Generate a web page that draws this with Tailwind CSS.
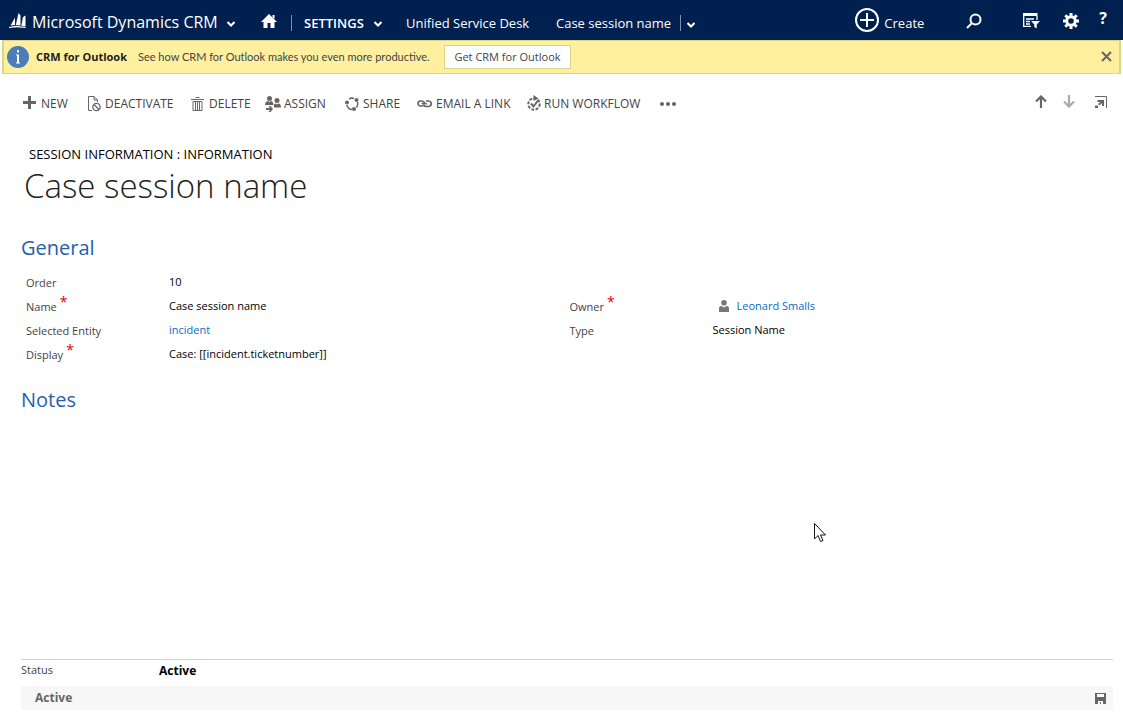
<!DOCTYPE html>
<html lang="en">
<head>
<meta charset="utf-8">
<title>Session Information: Case session name</title>
<script src="https://cdn.jsdelivr.net/npm/@tailwindcss/browser@4"></script>
</head>
<body class="min-h-screen flex flex-col bg-white font-['Open_Sans',sans-serif] text-xs text-[#444]">

<header class="h-10 flex items-center bg-[#00204f] text-white text-[13px] pl-2 pr-4 whitespace-nowrap">
  <a href="#" class="flex items-center w-[228px] pt-[3px]">
    <svg class="w-[18px] h-4 mr-[6px] mb-px" viewBox="0 0 18 16" fill="#fff"><path d="M7 4.500V12L2.500 12.500zM10.500 0 12.500 2.500V12.500L7.800 12zM15 4 17.500 2.500V13.500L13.300 12.700zM1 14 8 12.800 17.500 14V15L9 14.300 1 15z"/></svg>
    <span class="text-base">Microsoft Dynamics CRM</span>
    <svg class="w-2 h-2 ml-auto mr-px mt-1" viewBox="0 0 8 8" fill="none" stroke="#fff" stroke-width="2"><path d="M.5 2 4 5.500 7.500 2"/></svg>
  </a>
  <a href="#" aria-label="Home" class="ml-[25px] pt-[2px]"><svg class="w-4 h-4" viewBox="0 0 16 16" fill="#fff"><path d="M8 1 16 9H13.500V15H9.500V10H6.500V15H2.500V9H0zM11.500 2H13.500V6L11.500 4z"/></svg></a>
  <span class="w-px h-4 bg-[#7f8fa7] ml-[14px] mt-[6px]"></span>
  <button type="button" class="flex items-center ml-3 pt-2 w-[78px] font-semibold">SETTINGS<svg class="w-2 h-2 ml-auto mt-px" viewBox="0 0 8 8" fill="none" stroke="#fff" stroke-width="2"><path d="M.5 2 4 5.500 7.500 2"/></svg></button>
  <a href="#" class="ml-6 pt-2 w-[150px]">Unified Service Desk</a>
  <a href="#" class="pt-2 w-[124px]">Case session name</a>
  <button type="button" aria-label="More records" class="flex items-center border-l border-[#7f8fa7] h-4 mt-[6px] pl-[6px] pt-1"><svg class="w-2 h-2" viewBox="0 0 8 8" fill="none" stroke="#fff" stroke-width="2"><path d="M.5 2 4 5.500 7.500 2"/></svg></button>
  <button type="button" class="ml-auto flex items-center w-[111px]"><svg class="w-6 h-6 mr-[5px]" viewBox="0 0 24 24" fill="none" stroke="#fff" stroke-width="2"><circle cx="12" cy="12" r="11"/><path d="M12 5V19M5 12H19"/></svg><span class="pt-2">Create</span></button>
  <button type="button" aria-label="Search" class="w-[57px] text-left"><svg class="inline w-4 h-4" viewBox="0 0 16 16" fill="none" stroke="#fff" stroke-width="2"><circle cx="9.500" cy="6.500" r="5"/><path d="M6 10 1 15"/></svg></button>
  <button type="button" aria-label="Advanced find" class="w-10 text-left"><svg class="inline w-[17px] h-4" viewBox="0 0 17 16"><path d="M.7 0V13.300H8M14 3V7M3 6H11M3 8.500H7M3 11H7" fill="none" stroke="#fff" stroke-width="1.300"/><path d="M0 0H14.500V3H0zM8 8H17L13.700 11.500V15.500L11.300 14V11.500z" fill="#fff"/></svg></button>
  <button type="button" aria-label="Options" class="w-9 text-left"><svg class="inline w-4 h-4" viewBox="0 0 16 16" fill="none" stroke="#fff"><circle cx="8" cy="8" r="4.300" stroke-width="3"/><path stroke-width="3" d="M8 0V3M8 13V16M0 8H3M13 8H16M2.300 2.300 4.500 4.500M11.500 11.500 13.700 13.700M13.700 2.300 11.500 4.500M4.500 11.500 2.300 13.700"/></svg></button>
  <button type="button" aria-label="Help" class="text-base font-bold leading-4 pb-1">?</button>
</header>

<aside class="h-[34px] ml-[2px] mr-[2px] flex items-center border border-x-2 border-[#d9d58a] bg-[#fff09f] pl-[3px] pr-[7px] whitespace-nowrap text-[11px]">
  <svg class="w-[22px] h-[22px] mr-[7px]" viewBox="0 0 22 22"><circle cx="11" cy="11" r="11" fill="#4b7db8"/><path d="M10 4H12V6.500H10zM9 8.500H12V16.500H13V17.500H9V16.500H10V9.500H9z" fill="#fff"/></svg>
  <strong class="w-[102px] text-[#222]">CRM for Outlook</strong>
  <span class="w-[306px] font-[Lato,sans-serif]">See how CRM for Outlook makes you even more productive.</span>
  <button type="button" class="h-6 w-[127px] bg-white border border-[#d9d58a]">Get CRM for Outlook</button>
  <button type="button" aria-label="Close" class="ml-auto pb-[2px]"><svg class="w-[11px] h-[11px]" viewBox="0 0 11 11" stroke="#666" stroke-width="2"><path d="M1 1 10 10M10 1 1 10"/></svg></button>
</aside>

<nav aria-label="Commands" class="h-[58px] flex items-center pl-[23px] pr-4 pt-px whitespace-nowrap">
  <button type="button" class="flex items-center w-[65px]"><svg class="w-[13px] h-[13px] mr-[5px] mb-[2px]" viewBox="0 0 13 13" stroke="#666" stroke-width="3"><path d="M6.500 0V13M0 6.500H13"/></svg>NEW</button>
  <button type="button" class="flex items-center w-[103px]"><svg class="w-[13px] h-4 mr-1" viewBox="0 0 13 16" fill="none" stroke="#666"><path d="M4 14.500H.5V.5H6L9.500 4V6M6 .5V4H9.500"/><circle cx="8.500" cy="11" r="3.700" stroke-width="1.300"/><path d="M6 8.500 11 13.500" stroke-width="1.300"/></svg>DEACTIVATE</button>
  <button type="button" class="flex items-center w-[74px]"><svg class="w-[13px] h-[14px] mr-[5px]" viewBox="0 0 13 14" fill="none" stroke="#666"><path d="M4.500 .5H8.500M0 2.500H13M2 4.500V13.500H11V4.500zM4.500 5V13M6.500 5V13M8.500 5V13"/></svg>DELETE</button>
  <button type="button" class="flex items-center w-[80px]"><svg class="w-4 h-4 mr-[3px]" viewBox="0 0 16 16" fill="#666"><circle cx="4.500" cy="2.500" r="2.500"/><path d="M0 9C0 6 2 5 3 5L4.500 6 6 5C7 5 8.500 6 8.500 9z"/><circle cx="12" cy="4.500" r="2.500"/><path d="M9 11.500C8.500 8.500 9.500 7.500 10.500 7.500L12 8.500 13.500 7.500C14.500 7.500 16 8 16 11.500zM1 12H5L3.500 10H5.500L8 13 5.500 16H3.500L5 14H1z"/></svg>ASSIGN</button>
  <button type="button" class="flex items-center w-[72px]"><svg class="w-[14px] h-[14px] mr-1" viewBox="0 0 14 14"><g fill="none" stroke="#666" stroke-width="1.500"><path d="M4 2C5.500 1 7.500 1 9 1.500M12.500 5C13 7 12.500 9 11.500 10.500M7 12.500C4 12.500 2.500 10.500 1.800 8"/></g><g fill="#666"><circle cx="2" cy="5.500" r="2"/><circle cx="11.500" cy="3" r="2"/><circle cx="9" cy="12" r="2"/></g></svg>SHARE</button>
  <button type="button" class="flex items-center w-[110px]"><svg class="w-[15px] h-2 mr-1" viewBox="0 0 15 8" fill="none" stroke="#666" stroke-width="1.700"><path d="M7.500 3Q7 1 5 1H3.500A2.500 2.500 0 0 0 3.500 6H6M4.500 3.500H8.500Q9.500 3.500 9.500 4.500M9 1H11.500A2.500 2.500 0 0 1 11.500 6.500H9.500Q7 6.500 6.500 4.500"/></svg>EMAIL A LINK</button>
  <button type="button" class="flex items-center w-[133px]"><svg class="w-[14px] h-4 mr-[3px] mb-px" viewBox="0 0 14 16" fill="none" stroke="#666"><circle cx="7" cy="9" r="5.700" stroke-width="2" stroke-dasharray="2.800 1.500"/><path d="M4 8.500 6.500 11.500 11 5.500" stroke-width="2"/><path d="M6.500 0 11.500 3.500 6.500 6z" fill="#666" stroke="none"/></svg>RUN WORKFLOW</button>
  <button type="button" aria-label="More commands"><svg class="w-4 h-1" viewBox="0 0 16 4" fill="#666"><circle cx="2" cy="2" r="2"/><circle cx="8" cy="2" r="2"/><circle cx="14" cy="2" r="2"/></svg></button>
  <button type="button" aria-label="Previous" class="ml-auto pb-1"><svg class="w-3 h-[13px]" viewBox="0 0 12 13" fill="none" stroke="#666" stroke-width="2.200"><path d="M6 13V2M1 6.500 6 1.500 11 6.500"/></svg></button>
  <button type="button" aria-label="Next" class="ml-4 pb-1"><svg class="w-3 h-[13px]" viewBox="0 0 12 13" fill="none" stroke="#aaa" stroke-width="2.200"><path d="M6 0V11M1 6.500 6 11.500 11 6.500"/></svg></button>
  <button type="button" aria-label="Pop out" class="ml-5 pb-1"><svg class="w-3 h-3" viewBox="0 0 12 12"><path d="M0 .5H11.500V12" fill="none" stroke="#666"/><path d="M2.500 4H9V10H7V7L4.500 9.500 3 8 5.500 6H2.500zM0 9.500H3V12H0z" fill="#666"/></svg></button>
</nav>

<main class="flex-1 flex flex-col">
  <p class="mt-3 ml-[29px] leading-5 text-[13px] text-black">SESSION INFORMATION : INFORMATION</p>
  <h1 class="ml-6 leading-[44px] text-[33px] font-light text-[#222]">Case session name</h1>
  <h2 class="ml-[21px] mt-[26px] leading-7 text-xl text-[#1f5fb0]">General</h2>
  <div class="mt-2 ml-[26px] mr-[10px] grid grid-cols-2 leading-6 text-[11px]">
    <dl class="grid grid-cols-[143px_1fr] auto-rows-[24px]">
      <dt class="pt-px">Order</dt><dd class="text-black">10</dd>
      <dt class="pt-px">Name<span class="text-[#e00000] text-sm leading-none align-top ml-[3px]">*</span></dt><dd class="text-black">Case session name</dd>
      <dt class="pt-px">Selected Entity</dt><dd><a href="#" class="text-[#0b6ac4]">incident</a></dd>
      <dt class="pt-px">Display<span class="text-[#e00000] text-sm leading-none align-top ml-[3px]">*</span></dt><dd class="text-black">Case: [[incident.ticketnumber]]</dd>
    </dl>
    <dl class="mt-6 grid grid-cols-[143px_1fr] auto-rows-[24px]">
      <dt class="pt-px">Owner<span class="text-[#e00000] text-sm leading-none align-top ml-[3px]">*</span></dt><dd class="flex items-center pl-[6px]"><svg class="w-[10px] h-3 mr-2" viewBox="0 0 10 12" fill="#777"><circle cx="5" cy="2.800" r="2.800"/><path d="M0 12V8Q0 6 2.500 6L5 7.500 7.500 6Q10 6 10 8V12z"/></svg><a href="#" class="text-[#0b6ac4]">Leonard Smalls</a></dd>
      <dt class="pt-px">Type</dt><dd class="text-black">Session Name</dd>
    </dl>
  </div>
  <h2 class="ml-[21px] mt-5 leading-7 text-xl text-[#1f5fb0]">Notes</h2>
</main>

<footer class="ml-[21px] mr-[10px] mb-[6px] border-t border-[#d4d4d4]">
  <dl class="flex h-[26px] text-[11px]"><dt class="w-[138px] leading-[19px]">Status</dt><dd class="leading-[22px] text-xs font-bold text-black">Active</dd></dl>
  <div class="h-6 flex items-center justify-between bg-[#f7f7f7] pl-[14px] pr-[7px]">
    <strong class="text-[#666]">Active</strong>
    <button type="button" aria-label="Save"><svg class="w-[11px] h-[11px]" viewBox="0 0 11 11"><path d="M0 0H11V11H0z" fill="#666"/><path d="M2 1H9V4H2zM3 8H8V11H6V9H5V11H3z" fill="#fff"/></svg></button>
  </div>
</footer>

<svg class="absolute left-[814px] top-[523px] w-3 h-5" viewBox="0 0 12 20" fill="#fff" stroke="#112"><path d="M.5 .5V16L4 12.500 6.500 18.500 9 17.500 6.500 12H11.500z"/></svg>
</body>
</html>
